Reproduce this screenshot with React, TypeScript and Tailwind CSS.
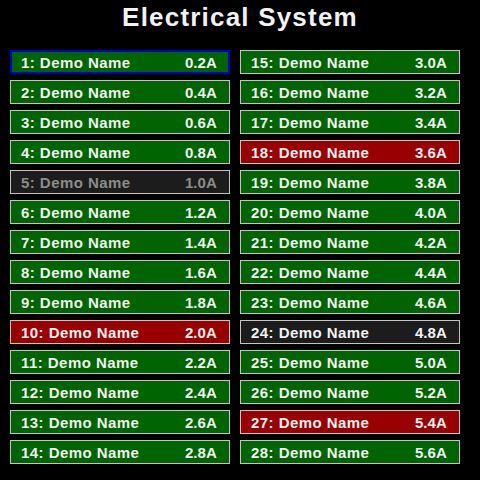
type Circuit = {
  id: number;
  amps: number;
  state: "on" | "fault" | "off";
};

const faults = [10, 18, 27];
const off = [5, 24];

const circuits: Circuit[] = Array.from({ length: 28 }, (_, i) => {
  const id = i + 1;
  return {
    id,
    amps: id * 0.2,
    state: faults.includes(id) ? "fault" : off.includes(id) ? "off" : "on",
  };
});

function CircuitRow({ c, selected }: { c: Circuit; selected: boolean }) {
  const bg =
    c.state === "fault"
      ? "bg-[#990000]"
      : c.state === "off"
        ? "bg-[#1c1c1c]"
        : "bg-[#006400]";
  const text = c.id === 5 ? "text-[#8c8c8c]" : "text-[#f2f2f2]";
  const border = selected
    ? "border-2 border-[#0000cc] pl-[9px] pr-[11px]"
    : "border border-[#c4c4c4] pl-[10px] pr-[12px]";

  return (
    <div
      className={`flex h-[24px] items-center justify-between pt-px text-[15px] font-bold leading-none ${bg} ${text} ${border}`}
    >
      <span className="tracking-[0.45px]">
        {c.id}: Demo Name
      </span>
      <span className="tracking-[0.1px]">{c.amps.toFixed(1)}A</span>
    </div>
  );
}

export default function App() {
  const left = circuits.slice(0, 14);
  const right = circuits.slice(14);

  return (
    <div
      className="h-[480px] w-[480px] bg-black"
      style={{ fontFamily: '"Liberation Sans", Arial, sans-serif' }}
    >
      <h1 className="flex h-[34px] items-center justify-center text-[26px] font-bold leading-none tracking-[1.2px] text-[#f2f2f2]">
        Electrical System
      </h1>
      <div className="mt-[16px] flex gap-[10px] pl-[10px]">
        <div className="flex w-[220px] flex-col gap-[6px]">
          {left.map((c) => (
            <CircuitRow key={c.id} c={c} selected={c.id === 1} />
          ))}
        </div>
        <div className="flex w-[220px] flex-col gap-[6px]">
          {right.map((c) => (
            <CircuitRow key={c.id} c={c} selected={false} />
          ))}
        </div>
      </div>
    </div>
  );
}
